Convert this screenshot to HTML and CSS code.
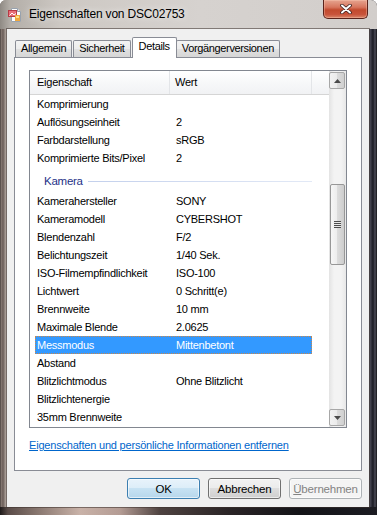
FILE: index.html
```html
<!DOCTYPE html>
<html lang="de">
<head>
    <meta charset="UTF-8">
    <meta name="viewport" content="width=device-width, initial-scale=1.0">
    <title>Eigenschaften von DSC02753</title>
    <link rel="stylesheet" href="styles.css">
</head>
<body>
<div class="window">
    <!-- Titelleiste -->
    <div class="titlebar">
        <svg class="app-icon" width="16" height="16" viewBox="0 0 16 16">
            <path d="M4.5 1.5h6l3 3v10h-9z" fill="#fdfdfd" stroke="#98a2ae"/>
            <path d="M10.5 1.5v3h3" fill="#e4e8ee" stroke="#98a2ae"/>
            <rect x="1.5" y="3.5" width="8" height="6" fill="#e8707a" stroke="#b83a44"/>
            <path d="M2.5 8.5l2.5-2.5 2 2 2-1.5" fill="none" stroke="#fff" stroke-width="1"/>
            <rect x="8" y="8" width="5" height="6" fill="#f2a83c"/>
            <rect x="9" y="9" width="3" height="2" fill="#fbe28a"/>
        </svg>
        <span class="title">Eigenschaften von DSC02753</span>
        <div class="close-btn">
            <svg width="12" height="10" viewBox="0 0 12 10">
                <path d="M2 1.5l8 7M10 1.5l-8 7" stroke="#3a2020" stroke-width="3.6" stroke-linecap="round"/>
                <path d="M2 1.5l8 7M10 1.5l-8 7" stroke="#ffffff" stroke-width="2" stroke-linecap="round"/>
            </svg>
        </div>
    </div>

    <div class="client">
        <!-- Reiter -->
        <div class="tabs">
            <div class="tab">Allgemein</div>
            <div class="tab">Sicherheit</div>
            <div class="tab active">Details</div>
            <div class="tab">Vorgängerversionen</div>
        </div>

        <div class="panel">
            <div class="listview">
                <div class="list-main">
                    <div class="list-header">
                        <div class="col-name">Eigenschaft</div>
                        <div class="col-value">Wert</div>
                    </div>
                    <div class="rows">
                        <div class="row"><span class="name">Komprimierung</span><span class="value"></span></div>
                        <div class="row"><span class="name">Auflösungseinheit</span><span class="value">2</span></div>
                        <div class="row"><span class="name">Farbdarstellung</span><span class="value">sRGB</span></div>
                        <div class="row"><span class="name">Komprimierte Bits/Pixel</span><span class="value">2</span></div>
                        <div class="group">Kamera</div>
                        <div class="row"><span class="name">Kamerahersteller</span><span class="value">SONY</span></div>
                        <div class="row"><span class="name">Kameramodell</span><span class="value">CYBERSHOT</span></div>
                        <div class="row"><span class="name">Blendenzahl</span><span class="value">F/2</span></div>
                        <div class="row"><span class="name">Belichtungszeit</span><span class="value">1/40 Sek.</span></div>
                        <div class="row"><span class="name">ISO-Filmempfindlichkeit</span><span class="value">ISO-100</span></div>
                        <div class="row"><span class="name">Lichtwert</span><span class="value">0 Schritt(e)</span></div>
                        <div class="row"><span class="name">Brennweite</span><span class="value">10 mm</span></div>
                        <div class="row"><span class="name">Maximale Blende</span><span class="value">2.0625</span></div>
                        <div class="row selected"><span class="name">Messmodus</span><span class="value">Mittenbetont</span></div>
                        <div class="row"><span class="name">Abstand</span><span class="value"></span></div>
                        <div class="row"><span class="name">Blitzlichtmodus</span><span class="value">Ohne Blitzlicht</span></div>
                        <div class="row"><span class="name">Blitzlichtenergie</span><span class="value"></span></div>
                        <div class="row"><span class="name">35mm Brennweite</span><span class="value"></span></div>
                    </div>
                </div>
                <div class="scrollbar">
                    <div class="sb-btn">
                        <svg width="7" height="4" viewBox="0 0 7 4"><path d="M3.5 0L7 4H0z" fill="#4a4a4a"/></svg>
                    </div>
                    <div class="sb-track">
                        <div class="sb-thumb">
                            <span class="grip"></span>
                        </div>
                    </div>
                    <div class="sb-btn">
                        <svg width="7" height="4" viewBox="0 0 7 4"><path d="M0 0h7L3.5 4z" fill="#4a4a4a"/></svg>
                    </div>
                </div>
            </div>
            <a class="remove-link" href="#">Eigenschaften und persönliche Informationen entfernen</a>
        </div>

        <!-- Schaltflächen -->
        <div class="buttons">
            <button class="btn default">OK</button>
            <button class="btn">Abbrechen</button>
            <button class="btn" disabled><u>Ü</u>bernehmen</button>
        </div>
    </div>
</div>
</body>
</html>
```

FILE: styles.css
```css
* {
    box-sizing: border-box;
}
body {
    margin: 0;
    font-family: "Liberation Sans", Arial, sans-serif;
    font-size: 11px;
    letter-spacing: -0.25px;
    color: #000;
    background: #fff;
}
.window {
    width: 377px;
    height: 515px;
    display: flex;
    flex-direction: column;
    border-radius: 6px 6px 0 0;
    overflow: hidden;
    background:
        linear-gradient(to right, #1e1a1a 0, #5a4c48 8px, #8c7a72 40px, #c9b2a8 80px, #b49c94 120px, #4e4240 160px, #2a2426 230px, #141418 300px, #1c1c22 377px) left bottom / 100% 8px no-repeat,
        linear-gradient(to right, #2e2826 0, #8a7d76 1px, #6a5d58 3px, #9b8f88 5px, #c4bcb6 7px, #c8c4c2 300px, #5c5c66 369px, #3a3a46 371px, #1a1a22 373px, #4c4c58 375px, #141418 377px);
}

/* Titelleiste */
.titlebar {
    height: 29px;
    flex-shrink: 0;
    display: flex;
    align-items: flex-start;
    background: linear-gradient(to right, #8f8a84 0, #b3aea8 10px, #cdc8c3 60px, #d6d2cf 200px, #d2cecb 377px);
}
.app-icon {
    margin: 7px 0 0 7px;
}
.title {
    margin: 7px 0 0 6px;
    font-size: 12px;
    letter-spacing: -0.2px;
    line-height: 15px;
    text-shadow: 0 0 6px rgba(255, 255, 255, 0.9);
}
.close-btn {
    margin-left: auto;
    margin-right: 9px;
    width: 45px;
    height: 19px;
    display: flex;
    align-items: center;
    justify-content: center;
    border: 1px solid #5a231b;
    border-top: none;
    border-radius: 0 0 5px 5px;
    background: linear-gradient(#e6a48f 0, #d7765e 40%, #c24a2e 55%, #c8533a 80%, #d9866a 100%);
    box-shadow: inset 0 0 0 1px rgba(255, 210, 190, 0.35);
}

/* Fensterinhalt */
.client {
    height: 478px;
    margin: 0 8px 0 7px;
    padding: 8px 7px 0;
    background: #f0f0f0;
    box-shadow: 0 0 0 1px rgba(60, 50, 46, 0.55);
}
.tabs {
    height: 20px;
    display: flex;
    align-items: flex-end;
    padding-left: 1px;
}
.tab {
    height: 17px;
    padding: 0 5px;
    margin-right: 1px;
    border: 1px solid #898c95;
    border-bottom: none;
    border-radius: 2px 2px 0 0;
    line-height: 15px;
    letter-spacing: -0.35px;
    white-space: nowrap;
    background: linear-gradient(#f3f3f3, #ececec 50%, #e1e1e1 50%, #d6d6d6);
}
.tab.active {
    position: relative;
    z-index: 1;
    height: 21px;
    margin-bottom: -1px;
    margin-right: -1px;
    padding: 0 6px;
    line-height: 17px;
    background: #fff;
}
.panel {
    height: 414px;
    padding: 12px 14px 0;
    border: 1px solid #898c95;
    background: #fff;
}

/* Liste */
.listview {
    height: 358px;
    display: flex;
    border: 1px solid #828790;
    background: #fff;
}
.list-main {
    flex: 1;
    overflow: hidden;
}
.list-header {
    height: 24px;
    display: flex;
    border-bottom: 1px solid #d5d5d5;
    background: linear-gradient(#ffffff, #f7f8f9 50%, #f1f2f4);
    line-height: 23px;
}
.col-name {
    width: 140px;
    padding-left: 7px;
    border-right: 1px solid #e3e5e8;
}
.col-value {
    width: 142px;
    padding-left: 5px;
    border-right: 1px solid #e3e5e8;
}
.rows {
    width: 282px;
    padding-left: 5px;
}
.row {
    height: 18px;
    display: flex;
    line-height: 18px;
    white-space: nowrap;
}
.row .name {
    width: 136px;
    padding-left: 2px;
}
.row .value {
    padding-left: 5px;
}
.row.selected {
    color: #fff;
    background: #3399ff;
    outline: 1px dotted #c9874a;
    outline-offset: -1px;
}
.group {
    height: 25px;
    display: flex;
    align-items: center;
    padding: 3px 0 0 9px;
    font-size: 11.5px;
    color: #1e3287;
}
.group::after {
    content: "";
    flex: 1;
    height: 1px;
    margin-left: 5px;
    background: linear-gradient(to right, #c3d0ec, #e2e9f6);
}

/* Bildlaufleiste */
.scrollbar {
    width: 17px;
    display: flex;
    flex-direction: column;
    padding: 1px 0;
    background: linear-gradient(to right, #e3e3e3, #f3f3f3 30%, #f3f3f3 70%, #e8e8e8);
}
.sb-btn {
    height: 17px;
    width: 16px;
    display: flex;
    align-items: center;
    justify-content: center;
    border: 1px solid #a7a7a7;
    border-radius: 2px;
    background: linear-gradient(to right, #f2f2f2, #ebebeb 50%, #dcdcdc 50%, #d0d0d0);
}
.sb-track {
    flex: 1;
    padding-top: 95px;
}
.sb-thumb {
    width: 15px;
    height: 81px;
    margin-left: 1px;
    display: flex;
    align-items: center;
    justify-content: center;
    border: 1px solid #979797;
    border-radius: 2px;
    background: linear-gradient(to right, #f6f6f6, #ececec 50%, #dcdcdc 50%, #cdcdcd);
}
.grip {
    width: 7px;
    height: 7px;
    background: repeating-linear-gradient(#4d4d4d 0, #4d4d4d 1px, #e8e8e8 1px, #e8e8e8 2px);
}

.remove-link {
    display: inline-block;
    margin-top: 10px;
    line-height: 15px;
    letter-spacing: -0.2px;
    color: #0066cc;
}

/* Schaltflächen */
.buttons {
    display: flex;
    justify-content: flex-end;
    gap: 8px;
    margin-top: 7px;
}
.btn {
    width: 73px;
    height: 21px;
    padding: 0;
    font-family: inherit;
    font-size: 11.5px;
    letter-spacing: -0.2px;
    color: #000;
    border: 1px solid #707070;
    border-radius: 3px;
    background: linear-gradient(#f2f2f2, #ebebeb 50%, #dddddd 50%, #cfcfcf);
    box-shadow: inset 0 0 0 1px rgba(255, 255, 255, 0.6);
}
.btn.default {
    border-color: #3c7fb1;
    background: linear-gradient(#e8f3fb, #dcedf8 50%, #c7e2f3 50%, #b7d7ec);
}
.btn:disabled {
    color: #838383;
    border-color: #adb2b5;
    background: #f4f4f4;
}
```
